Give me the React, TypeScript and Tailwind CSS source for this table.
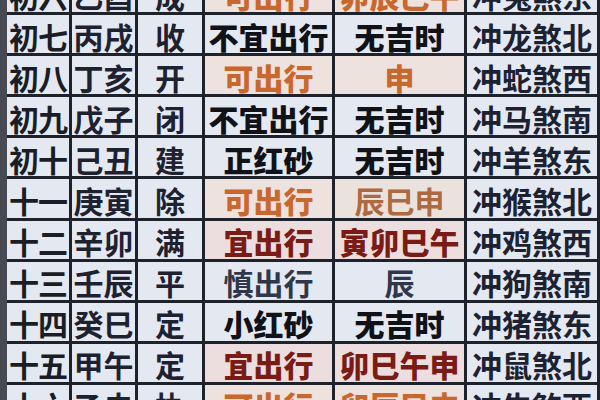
import React from "react";

type Tone = "plain" | "orange" | "brown" | "red" | "slate";

interface Row {
  day: string;
  ganzhi: string;
  shen: string;
  trip: [string, Tone];
  hours: [string, Tone];
  clash: string;
}

const rows: Row[] = [
  { day: "初六", ganzhi: "乙酉", shen: "成", trip: ["可出行", "orange"], hours: ["卯辰巳午", "orange"], clash: "冲兔煞东" },
  { day: "初七", ganzhi: "丙戌", shen: "收", trip: ["不宜出行", "plain"], hours: ["无吉时", "plain"], clash: "冲龙煞北" },
  { day: "初八", ganzhi: "丁亥", shen: "开", trip: ["可出行", "orange"], hours: ["申", "orange"], clash: "冲蛇煞西" },
  { day: "初九", ganzhi: "戊子", shen: "闭", trip: ["不宜出行", "plain"], hours: ["无吉时", "plain"], clash: "冲马煞南" },
  { day: "初十", ganzhi: "己丑", shen: "建", trip: ["正红砂", "plain"], hours: ["无吉时", "plain"], clash: "冲羊煞东" },
  { day: "十一", ganzhi: "庚寅", shen: "除", trip: ["可出行", "orange"], hours: ["辰巳申", "brown"], clash: "冲猴煞北" },
  { day: "十二", ganzhi: "辛卯", shen: "满", trip: ["宜出行", "red"], hours: ["寅卯巳午", "red"], clash: "冲鸡煞西" },
  { day: "十三", ganzhi: "壬辰", shen: "平", trip: ["慎出行", "slate"], hours: ["辰", "slate"], clash: "冲狗煞南" },
  { day: "十四", ganzhi: "癸巳", shen: "定", trip: ["小红砂", "plain"], hours: ["无吉时", "plain"], clash: "冲猪煞东" },
  { day: "十五", ganzhi: "甲午", shen: "定", trip: ["宜出行", "red"], hours: ["卯巳午申", "red"], clash: "冲鼠煞北" },
  { day: "十六", ganzhi: "乙未", shen: "执", trip: ["可出行", "orange"], hours: ["卯辰巳申", "orange"], clash: "冲牛煞西" },
];

const toneClass: Record<Tone, string> = {
  plain: "bg-[#e3e8f1] text-[#101217] font-black",
  orange: "bg-[#eee2de] text-[#c9682e] font-black",
  brown: "bg-[#ebe2de] text-[#ad6a40] font-bold",
  red: "bg-[#ecdedf] text-[#7a1c15] font-black",
  slate: "bg-[#e3e8f1] text-[#30374a] font-bold",
};

const cell = "h-[38.1px] pt-[3px] flex items-center justify-center leading-none";

const App = () => {
  return (
    <div className="w-[600px] h-[400px] overflow-hidden bg-[#1e222a] font-['Noto_Sans_CJK_SC',sans-serif] text-[30px]">
      <div className="-mt-[26px] pl-[7px] pr-[3px] grid grid-cols-[62px_63px_64px_127px_129px_130px] gap-x-[3px] gap-y-[3px] bg-[linear-gradient(to_right,#474a53_0,#474a53_7px,#1e222a_7px)]">
        {rows.map((r) => (
          <React.Fragment key={r.day}>
            <div className={`${cell} bg-[#e3e8f1] text-[#1a1d24] font-bold tracking-[-1px]`}>
              {r.day}
            </div>
            <div className={`${cell} bg-[#e3e8f1] text-[#1e2230] font-bold`}>
              {r.ganzhi}
            </div>
            <div className={`${cell} bg-[#e3e8f1] text-[#1e2230] font-bold`}>
              {r.shen}
            </div>
            <div className={`${cell} ${toneClass[r.trip[1]]}`}>{r.trip[0]}</div>
            <div className={`${cell} ${toneClass[r.hours[1]]}`}>{r.hours[0]}</div>
            <div className={`${cell} bg-[#e3e8f1] text-[#1c2231] font-bold`}>
              {r.clash}
            </div>
          </React.Fragment>
        ))}
      </div>
    </div>
  );
};

export default App;
